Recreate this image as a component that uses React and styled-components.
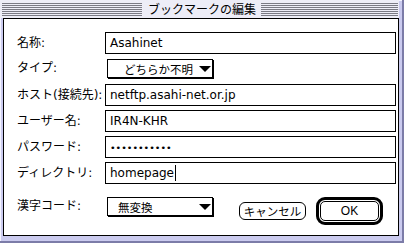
import React from 'react'
import styled, { createGlobalStyle } from 'styled-components'

const Global = createGlobalStyle`
  html, body { margin: 0; padding: 0; background: #fff; }
  body { font-family: "DejaVu Sans", "Noto Sans CJK JP", sans-serif; }
`

const frame = "#cbcbef"
const edge = "#7c7ca8"
const titleBg = "#ededf7"

const Window = styled.div`
  width: 404px;
  height: 243px;
  box-sizing: border-box;
  background: ${frame};
  box-shadow: inset -2px -2px 0 ${edge}, inset 1px 1px 0 #f4f4ff;
  display: flex;
  flex-direction: column;
`

const TitleBar = styled.div`
  height: 18px;
  margin-right: 5px;
  display: flex;
  align-items: center;
  justify-content: center;
  background:
    repeating-linear-gradient(to bottom, #7a7a84 0 1px, ${titleBg} 1px 2px) 2px 3px / calc(100% - 3px) 13px no-repeat,
    ${titleBg};
`

const Title = styled.span`
  background: ${titleBg};
  padding: 0 5px 0 6px;
  margin-left: 4px;
  font-family: "Noto Sans CJK JP", sans-serif;
  font-size: 12px;
  line-height: 14px;
  color: #000;
`

const Body = styled.div`
  flex: 1;
  margin: 0 5px 7px 3px;
  border: 1px solid #000;
  background: #fff;
  padding: 13px 2px 0 13px;
  display: flex;
  flex-direction: column;
`

const Rows = styled.div`
  display: flex;
  flex-direction: column;
  gap: 4px;
`

const Row = styled.div`
  display: flex;
  align-items: ${p => (p.$top ? 'flex-start' : 'center')};
  height: 22px;
`

const Label = styled.div`
  width: 88px;
  flex: none;
  font-family: "DejaVu Sans", "Noto Sans CJK JP", sans-serif;
  font-size: 12px;
  line-height: ${p => p.$lh || 22}px;
  color: #000;
  white-space: nowrap;
`

const Field = styled.div`
  width: 291px;
  height: 22px;
  box-sizing: border-box;
  border: 1px solid #000;
  padding-left: 4px;
  display: flex;
  align-items: center;
  font-family: "DejaVu Sans", "Noto Sans CJK JP", sans-serif;
  font-size: 12px;
  color: #000;
  white-space: nowrap;
`

const Dots = styled.span`
  font-size: 9.5px;
`

const Caret = styled.span`
  display: inline-block;
  width: 1px;
  height: 16px;
  background: #000;
  margin-left: 1px;
`

const Popup = styled.div`
  width: 106px;
  height: 19px;
  box-sizing: border-box;
  margin: ${p => p.$top}px 0 0 2px;
  border: 1px solid #000;
  box-shadow: 1px 1px 0 #000;
  background: #fff;
  display: flex;
  align-items: center;
  padding-left: ${p => p.$indent}px;
  padding-right: 1px;
  font-family: "Noto Sans CJK JP", sans-serif;
  font-size: 11.5px;
  color: #000;
  flex: none;
`

const Arrow = styled.span`
  margin-left: auto;
  width: 0;
  height: 0;
  border-left: 6px solid transparent;
  border-right: 6px solid transparent;
  border-top: 6px solid #000;
`

const Bottom = styled.div`
  display: flex;
  align-items: center;
  height: 28px;
  margin-top: 13px;
`

const Group = styled.div`
  display: flex;
  align-self: flex-start;
  height: 19px;
`

const Button = styled.div`
  width: 67px;
  height: 18px;
  box-sizing: border-box;
  border: 1px solid #000;
  border-radius: 6px;
  display: flex;
  align-items: center;
  justify-content: center;
  font-family: "Noto Sans CJK JP", sans-serif;
  font-size: 11.5px;
  color: #000;
  background: #fff;
  margin-left: ${p => p.$gap}px;
`

const DefaultRing = styled.div`
  width: 67px;
  height: 28px;
  box-sizing: border-box;
  border: 3px solid #000;
  border-radius: 9px;
  padding: 1px;
  margin-left: 10px;
`

const DefaultButton = styled.div`
  height: 100%;
  box-sizing: border-box;
  border: 1px solid #000;
  border-radius: 5px;
  display: flex;
  align-items: center;
  justify-content: center;
  font-family: "Liberation Sans", sans-serif;
  font-size: 12px;
  color: #000;
`

export default function App() {
  return (
    <>
      <Global />
      <Window>
        <TitleBar>
          <Title>ブックマークの編集</Title>
        </TitleBar>
        <Body>
          <Rows>
            <Row>
              <Label>名称:</Label>
              <Field>Asahinet</Field>
            </Row>
            <Row $top>
              <Label $lh={21}>タイプ:</Label>
              <Popup $indent={16} $top={1}>
                どちらか不明
                <Arrow />
              </Popup>
            </Row>
            <Row>
              <Label>ホスト(接続先):</Label>
              <Field>netftp.asahi-net.or.jp</Field>
            </Row>
            <Row>
              <Label>ユーザー名:</Label>
              <Field>IR4N-KHR</Field>
            </Row>
            <Row>
              <Label>パスワード:</Label>
              <Field>
                <Dots>•••••••••••</Dots>
              </Field>
            </Row>
            <Row>
              <Label>ディレクトリ:</Label>
              <Field>
                homepage
                <Caret />
              </Field>
            </Row>
          </Rows>
          <Bottom>
            <Group>
              <Label $lh={19}>漢字コード:</Label>
              <Popup $indent={10} $top={0}>
                無変換
                <Arrow />
              </Popup>
            </Group>
            <Button $gap={26}>キャンセル</Button>
            <DefaultRing>
              <DefaultButton>OK</DefaultButton>
            </DefaultRing>
          </Bottom>
        </Body>
      </Window>
    </>
  )
}
